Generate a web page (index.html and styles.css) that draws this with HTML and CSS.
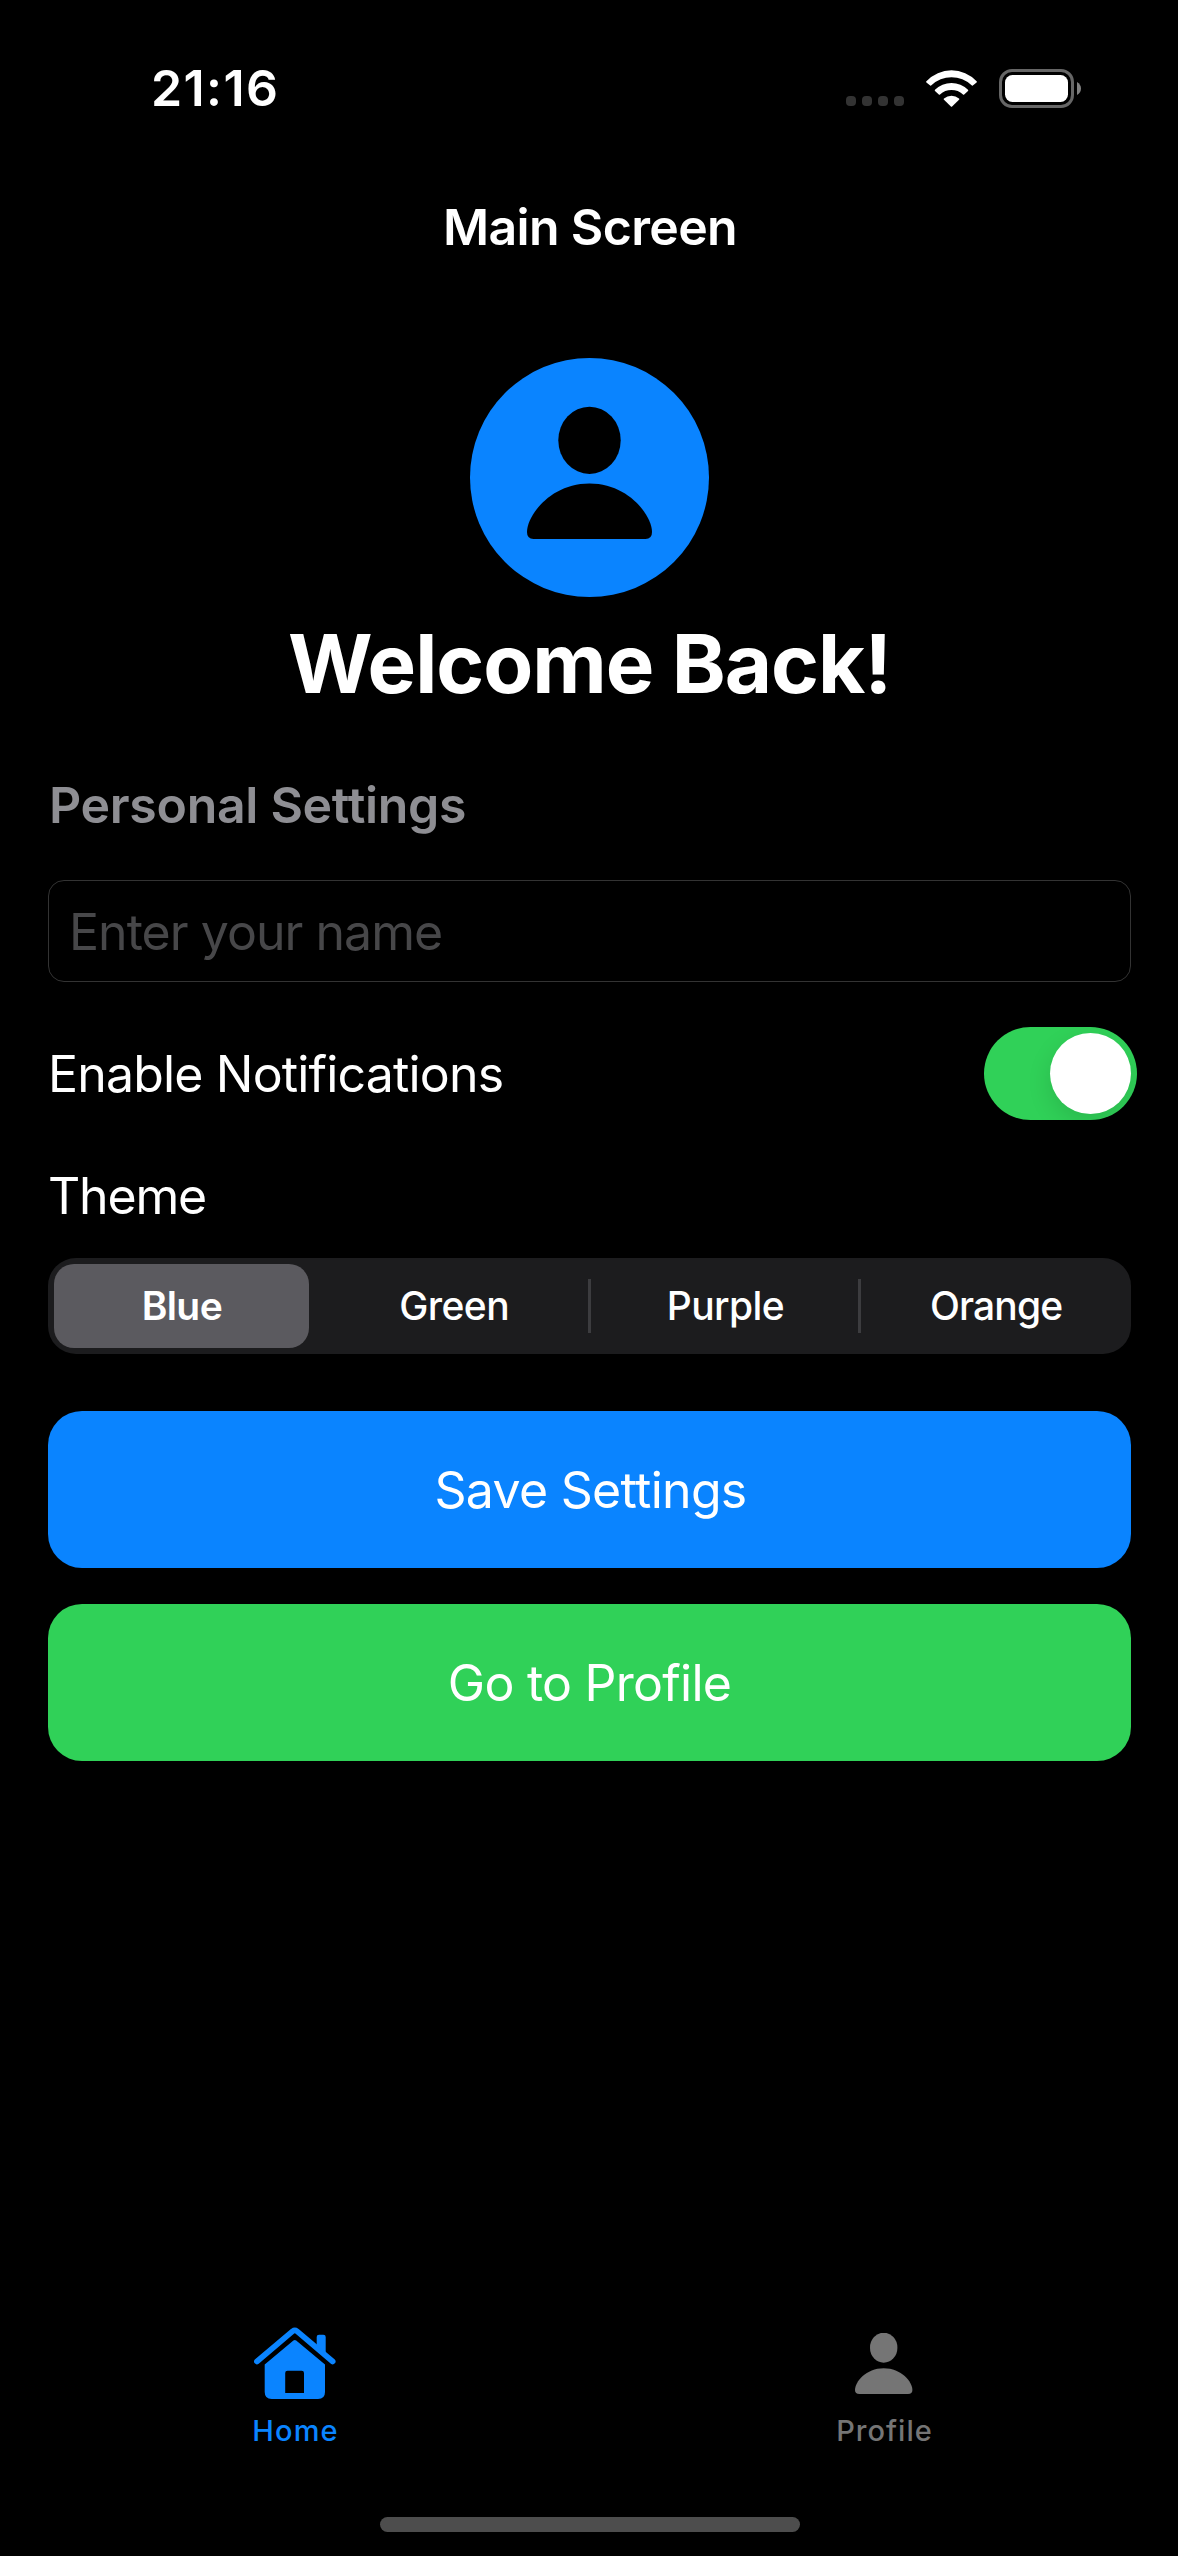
FILE: index.html
```html
<!DOCTYPE html>
<html lang="en">
<head>
<meta charset="utf-8">
<title>Main Screen</title>
<link rel="stylesheet" href="styles.css">
</head>
<body>
<div class="screen">
  <header class="status-bar">
    <span class="time">21:16</span>
    <div class="status-icons">
      <div class="signal"><i></i><i></i><i></i><i></i></div>
      <svg class="wifi" viewBox="0 0 51 37" width="51" height="37" fill="#fff">
        <path d="M.4 11.2A34.5 34.5 0 0 1 50.6 11.2Q51.2 11.8 50.6 12.4L46.8 15.4Q46.2 15.9 45.6 15.3A29 29 0 0 0 5.4 15.3Q4.8 15.9 4.2 15.4L.4 12.4Q-.2 11.8 .4 11.2Z"/>
        <path d="M9 19.8A23.3 23.3 0 0 1 42 19.8Q42.6 20.4 42 21L38.2 24.6Q37.6 25.1 37 24.6A17 17 0 0 0 14 24.6Q13.4 25.1 12.8 24.6L9 21Q8.4 20.4 9 19.8Z"/>
        <path d="M18 28.6A11.5 11.5 0 0 1 33 28.6Q33.6 29.2 33 29.8L26.1 36.6Q25.5 37.1 24.9 36.6L18 29.8Q17.4 29.2 18 28.6Z"/>
      </svg>
      <svg class="battery" viewBox="0 0 82 39" width="82" height="39">
        <rect x="1.5" y="1.5" width="72" height="36" rx="11.5" fill="none" stroke="#666" stroke-width="3"/>
        <rect x="6" y="6" width="63" height="27" rx="7.5" fill="#fff"/>
        <path d="M78 13Q82 15.500 82 19.500T78 26Z" fill="#808080"/>
      </svg>
    </div>
  </header>

  <h1 class="nav-title">Main Screen</h1>

  <main class="content">
    <svg class="avatar" viewBox="0 0 239 239" width="239" height="239">
      <circle cx="119.500" cy="119.500" r="119.500" fill="#0a84ff"/>
      <ellipse cx="119.500" cy="82.300" rx="31.200" ry="33.600"/>
      <path d="M57 174C57 158 80 125.500 119.500 125.500S182 158 182 174Q182 181 175.500 181H63.500Q57 181 57 174Z"/>
    </svg>
    <h2 class="welcome">Welcome Back!</h2>
    <h3 class="section-title">Personal Settings</h3>
    <input class="name-field" type="text" placeholder="Enter your name">
    <div class="toggle-row">
      <span class="notifications-label">Enable Notifications</span>
      <div class="switch"><div class="knob"></div></div>
    </div>
    <p class="theme-label">Theme</p>
    <div class="segments">
      <div class="segment selected">Blue</div>
      <div class="segment">Green</div>
      <div class="segment divided">Purple</div>
      <div class="segment divided orange">Orange</div>
    </div>
    <button class="button save">Save Settings</button>
    <button class="button profile">Go to Profile</button>
  </main>

  <nav class="tab-bar">
    <a class="tab active">
      <span class="tab-icon">
        <svg viewBox="0 0 82 72" width="82" height="72" fill="currentColor">
          <path d="M2.900 34.500L38.700 4.200Q40.800 2.600 42.900 4.200L78.700 34.500" fill="none" stroke="currentColor" stroke-width="5.600" stroke-linecap="round"/>
          <path d="M62.700 18V10Q62.700 7.700 65 7.700H69.400Q71.700 7.700 71.700 10V27Z"/>
          <path fill-rule="evenodd" d="M39.400 13.500Q40.800 12.500 42.200 13.500L71 37.500V65Q71 72 64 72H17.700Q10.700 72 10.700 65V37.500ZM33.500 43.700Q31.200 43.700 31.200 46V66H50V46Q50 43.700 47.700 43.700Z"/>
        </svg>
      </span>
      <span class="tab-label">Home</span>
    </a>
    <a class="tab">
      <span class="tab-icon">
        <svg class="person" viewBox="0 0 58 62" width="58" height="62" fill="currentColor">
          <ellipse cx="28.700" cy="14.700" rx="13.700" ry="15"/>
          <path d="M0 57C0 49 11 35.300 28.700 35.300S57.400 49 57.400 57Q57.400 61 53 61H4.400Q0 61 0 57Z"/>
        </svg>
      </span>
      <span class="tab-label profile-label">Profile</span>
    </a>
  </nav>
  <div class="home-indicator"></div>
</div>
</body>
</html>
```
FILE: styles.css
```css
* { box-sizing: border-box; margin: 0; padding: 0; }

body {
  background: #000;
  color: #fff;
  font-family: Inter, "Liberation Sans", sans-serif;
  font-size: 50px;
  line-height: 60px;
}

svg { display: block; }

.screen {
  width: 1178px;
  height: 2556px;
  display: flex;
  flex-direction: column;
  overflow: hidden;
}

.status-bar {
  height: 176px;
  flex: none;
  display: flex;
  align-items: center;
  justify-content: space-between;
  padding: 0 97px 0 151px;
}
.time { font-weight: 600; letter-spacing: 1.4px; }
.status-icons { display: flex; align-items: center; }
.signal { display: flex; gap: 6px; margin: 26px 22px 0 0; }
.signal i { width: 10px; height: 10px; border-radius: 4px; background: #333; }
.wifi { margin-right: 22px; }

.nav-title {
  height: 102px;
  line-height: 102px;
  flex: none;
  padding-left: 2px;
  text-align: center;
  font-size: 50px;
  font-weight: 600;
  letter-spacing: -0.65px;
}

.content {
  flex: 1;
  display: flex;
  flex-direction: column;
  padding: 80px 47px 0 48px;
}
.avatar { align-self: center; }
.welcome {
  margin-top: 18px;
  line-height: 98px;
  text-align: center;
  font-size: 81.6px;
  font-weight: 700;
  letter-spacing: -1px;
}
.section-title {
  margin-top: 62px;
  padding-left: 1px;
  font-size: 50px;
  font-weight: 600;
  letter-spacing: -0.31px;
  color: #8e8e93;
}
.name-field {
  margin-top: 45px;
  height: 102px;
  padding: 1px 20px 0;
  border: 1px solid #333;
  border-radius: 16px;
  background: transparent;
  color: #fff;
  font: inherit;
  letter-spacing: -0.96px;
}
.name-field::placeholder { color: #474749; opacity: 1; }

.toggle-row {
  height: 93px;
  margin: 45px -6px 0 0;
  display: flex;
  align-items: center;
  justify-content: space-between;
}
.notifications-label { letter-spacing: -0.83px; }
.switch {
  width: 153px;
  height: 93px;
  padding: 6px;
  border-radius: 47px;
  background: #30d158;
  display: flex;
  justify-content: flex-end;
  overflow: hidden;
}
.knob {
  width: 81px;
  height: 81px;
  border-radius: 50%;
  background: #fff;
  box-shadow: 0 9px 24px rgba(0, 0, 0, 0.12);
}

.theme-label { margin-top: 46px; letter-spacing: -1.2px; }

.segments {
  margin-top: 32px;
  height: 96px;
  display: grid;
  grid-template-columns: repeat(4, 1fr);
  align-items: center;
  border-radius: 28px;
  background: #1c1c1e;
}
.segment {
  height: 54px;
  line-height: 54px;
  text-align: center;
  font-size: 39px;
  font-weight: 500;
  letter-spacing: -0.6px;
}
.segment.selected {
  height: 84px;
  line-height: 84px;
  margin: 0 10px 0 6px;
  padding-left: 1px;
  border-radius: 20px;
  background: #5b5a5f;
  font-weight: 600;
}
.segment.divided { margin-left: -2px; border-left: 3px solid #3c3c3f; }
.segment.orange { letter-spacing: -0.9px; }

.button {
  height: 157px;
  border: 0;
  border-radius: 34px;
  color: #fff;
  font: inherit;
}
.save { margin-top: 57px; padding-left: 2px; background: #0a84ff; letter-spacing: -0.7px; }
.profile { margin-top: 36px; background: #30d158; letter-spacing: -0.75px; }

.tab-bar {
  height: 190px;
  flex: none;
  display: grid;
  grid-template-columns: 1fr 1fr;
  color: #757575;
}
.tab { display: flex; flex-direction: column; align-items: center; }
.tab.active { color: #0a84ff; }
.tab-icon { height: 72px; display: flex; align-items: flex-start; }
.person { margin-top: 6px; }
.tab-label {
  margin-top: 14px;
  padding-left: 2px;
  line-height: 36px;
  font-size: 29px;
  font-weight: 500;
  letter-spacing: 1.2px;
}
.profile-label { letter-spacing: 1px; }

.home-indicator {
  flex: none;
  align-self: center;
  width: 420px;
  height: 15px;
  margin: 0 0 24px 2px;
  border-radius: 8px;
  background: #4d4d4d;
}
```
